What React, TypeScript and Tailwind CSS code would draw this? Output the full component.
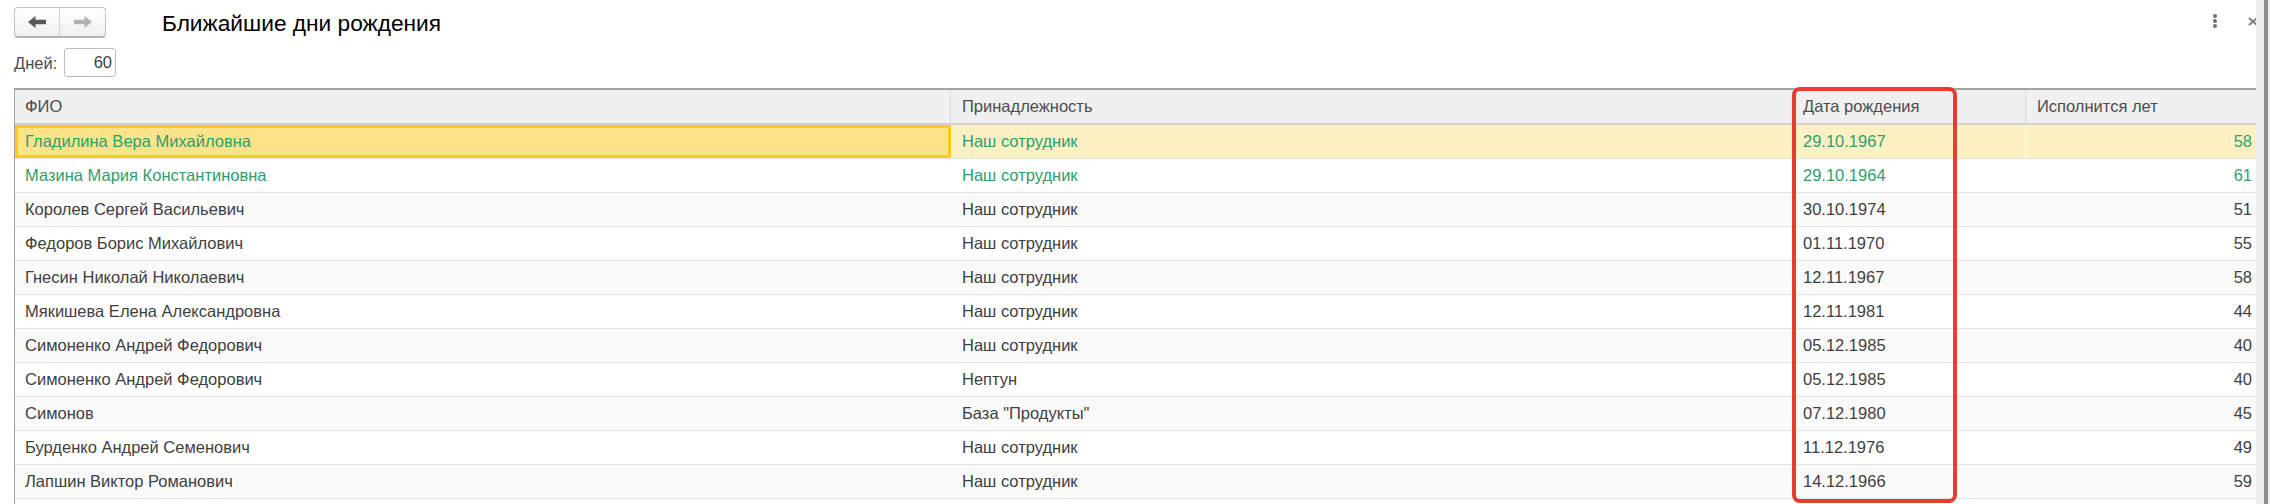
const people = [
  { name: 'Гладилина Вера Михайловна', org: 'Наш сотрудник', date: '29.10.1967', age: 58, soon: true },
  { name: 'Мазина Мария Константиновна', org: 'Наш сотрудник', date: '29.10.1964', age: 61, soon: true },
  { name: 'Королев Сергей Васильевич', org: 'Наш сотрудник', date: '30.10.1974', age: 51 },
  { name: 'Федоров Борис Михайлович', org: 'Наш сотрудник', date: '01.11.1970', age: 55 },
  { name: 'Гнесин Николай Николаевич', org: 'Наш сотрудник', date: '12.11.1967', age: 58 },
  { name: 'Мякишева Елена Александровна', org: 'Наш сотрудник', date: '12.11.1981', age: 44 },
  { name: 'Симоненко Андрей Федорович', org: 'Наш сотрудник', date: '05.12.1985', age: 40 },
  { name: 'Симоненко Андрей Федорович', org: 'Нептун', date: '05.12.1985', age: 40 },
  { name: 'Симонов', org: 'База "Продукты"', date: '07.12.1980', age: 45 },
  { name: 'Бурденко Андрей Семенович', org: 'Наш сотрудник', date: '11.12.1976', age: 49 },
  { name: 'Лапшин Виктор Романович', org: 'Наш сотрудник', date: '14.12.1966', age: 59 },
]

function Arrow({ dir, color }: { dir: 'left' | 'right'; color: string }) {
  return (
    <svg width="18" height="14" viewBox="0 0 18 14" className={dir === 'right' ? '-scale-x-100' : ''}>
      <path d="M0 7 L7.5 1 V4.8 H18 V9.2 H7.5 V13 Z" fill={color} />
    </svg>
  )
}

function HeaderCell({ title, className }: { title: string; className: string }) {
  return <div className={`flex items-center ${className}`}>{title}</div>
}

export default function App() {
  return (
    <div className="relative flex h-[504px] w-[2270px] overflow-hidden bg-white font-['Liberation_Sans',Arial,sans-serif] text-[16.5px] text-[#3f3f3f]">
      <div className="flex w-[2256px] flex-col overflow-hidden pl-[14px]">
        <div className="flex h-[48px] pt-[7px]">
          <div className="flex h-[31px] w-[92px] shrink-0 rounded-[4px] border border-[#c4c4c4] border-b-2 border-b-[#b4b4b4] bg-gradient-to-b from-white to-[#f0f0f0]">
            <div className="flex w-[45px] items-center justify-center border-r border-[#d2d2d2]">
              <Arrow dir="left" color="#5a5a5a" />
            </div>
            <div className="flex flex-1 items-center justify-center">
              <Arrow dir="right" color="#b4b4b4" />
            </div>
          </div>
          <div className="ml-[56px] h-[30px] text-[22.7px] leading-[32px] text-black">Ближайшие дни рождения</div>
          <div className="ml-auto -mr-[2px] flex shrink-0 items-start">
            <div className="mt-[7px] flex flex-col gap-[1px]">
              <span className="h-[4px] w-[4px] rounded-full bg-[#707070]" />
              <span className="h-[4px] w-[4px] rounded-full bg-[#707070]" />
              <span className="h-[4px] w-[4px] rounded-full bg-[#707070]" />
            </div>
            <svg width="10" height="9" viewBox="0 0 10 9" className="ml-[31px] mt-[10px]">
              <path d="M1 1 L9 8 M9 1 L1 8" stroke="#808080" strokeWidth="2" />
            </svg>
          </div>
        </div>

        <div className="flex h-[40px] items-start">
          <span className="mt-[5px] w-[50px] leading-[20px] text-[#4c4c4c]">Дней:</span>
          <div className="h-[29px] w-[52px] rounded-[3px] border border-[#bdbdbd] pr-[3px] text-right leading-[27px]">60</div>
        </div>

        <div className="flex-1 border-l border-l-[#a3a3a3] border-t-2 border-t-[#a3a3a3]">
          <div className="flex h-[35px] border-b-2 border-b-[#d2d2d2] bg-[#f0f0f0] text-[#4c4c4c]">
            <HeaderCell title="ФИО" className="w-[936px] border-r border-[#d8d8d8] pl-[10px]" />
            <HeaderCell title="Принадлежность" className="w-[841px] pl-[11px]" />
            <HeaderCell title="Дата рождения" className="w-[234px] border-r border-[#d8d8d8] pl-[11px]" />
            <HeaderCell title="Исполнится лет" className="flex-1 pl-[11px]" />
          </div>
          {people.map((p, i) => {
            const selected = i === 0
            const tint = selected ? 'bg-[#fdf1c3]' : i % 2 === 1 ? 'bg-white' : 'bg-[#fafafa]'
            return (
              <div
                key={i}
                className={`flex h-[34px] border-b border-b-[#e2e2e2] ${tint} ${p.soon ? 'text-[#2f9e6e]' : ''}`}
              >
                <div
                  className={`flex w-[936px] items-center ${
                    selected ? 'border-[3px] border-[#fdca1e] bg-[#fde48b] pl-[7px]' : 'pl-[10px]'
                  }`}
                >
                  {p.name}
                </div>
                <div className="flex w-[841px] items-center pl-[11px]">{p.org}</div>
                <div className={`flex w-[234px] items-center pl-[11px] ${selected ? 'border-r border-white' : ''}`}>
                  {p.date}
                </div>
                <div className="flex flex-1 items-center justify-end pr-[4px]">{p.age}</div>
              </div>
            )
          })}
        </div>
      </div>

      <div className="flex flex-1 bg-[#f0f0f0]">
        <div className="ml-[8px] h-full w-[4px] bg-[#8f8f8f]" />
      </div>

      <div className="absolute left-[1792px] top-[87px] h-[416px] w-[165px] rounded-[8px] border-[4px] border-[#e53e30]" />
    </div>
  )
}
